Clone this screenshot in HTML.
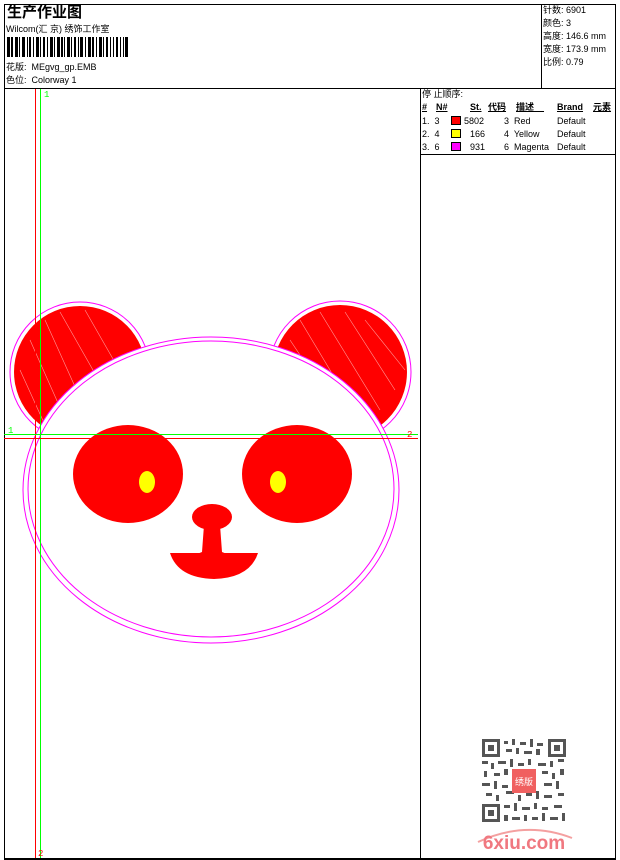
<!DOCTYPE html>
<html><head><meta charset="utf-8">
<style>
*{margin:0;padding:0;box-sizing:border-box}
body{width:620px;height:860px;background:#fff;position:relative;overflow:hidden;font-family:"Liberation Sans","Noto Sans CJK SC",sans-serif;font-size:9px;color:#000}
.a{position:absolute;white-space:nowrap;line-height:11px}
.b{position:absolute;background:#000}
</style></head><body>
<!-- borders -->
<div class="b" style="left:4px;top:4px;width:612px;height:1px"></div>
<div class="b" style="left:4px;top:4px;width:1px;height:856px"></div>
<div class="b" style="left:615px;top:4px;width:1px;height:856px"></div>
<div class="b" style="left:4px;top:858px;width:612px;height:2px"></div>
<div class="b" style="left:4px;top:88px;width:612px;height:1px"></div>
<div class="b" style="left:541px;top:4px;width:1px;height:84px"></div>
<div class="b" style="left:420px;top:88px;width:1px;height:770px"></div>
<div class="b" style="left:420px;top:154px;width:196px;height:1px"></div>

<div class="a" style="left:7px;top:4px;font-size:15px;line-height:18px;font-weight:bold">生产作业图</div>
<div class="a" style="left:6px;top:24px">Wilcom(汇 京) 绣饰工作室</div>
<svg style="position:absolute;left:7px;top:37px" width="121" height="20">
<g fill="#000">
<rect x="0" y="0" width="3" height="20"/><rect x="4" y="0" width="2" height="20"/><rect x="8" y="0" width="3" height="20"/><rect x="12" y="0" width="1" height="20"/><rect x="15" y="0" width="3" height="20"/><rect x="20" y="0" width="1" height="20"/><rect x="22" y="0" width="2" height="20"/><rect x="26" y="0" width="1" height="20"/><rect x="29" y="0" width="3" height="20"/><rect x="33" y="0" width="1" height="20"/><rect x="36" y="0" width="2" height="20"/><rect x="40" y="0" width="1" height="20"/><rect x="43" y="0" width="3" height="20"/><rect x="47" y="0" width="1" height="20"/><rect x="50" y="0" width="3" height="20"/><rect x="54" y="0" width="2" height="20"/><rect x="57" y="0" width="1" height="20"/><rect x="60" y="0" width="3" height="20"/><rect x="64" y="0" width="1" height="20"/><rect x="67" y="0" width="2" height="20"/><rect x="71" y="0" width="1" height="20"/><rect x="73" y="0" width="3" height="20"/><rect x="78" y="0" width="1" height="20"/><rect x="81" y="0" width="3" height="20"/><rect x="85" y="0" width="2" height="20"/><rect x="89" y="0" width="1" height="20"/><rect x="92" y="0" width="3" height="20"/><rect x="96" y="0" width="1" height="20"/><rect x="99" y="0" width="2" height="20"/><rect x="103" y="0" width="1" height="20"/><rect x="106" y="0" width="1" height="20"/><rect x="109" y="0" width="2" height="20"/><rect x="113" y="0" width="1" height="20"/><rect x="116" y="0" width="1" height="20"/><rect x="118" y="0" width="3" height="20"/>
</g></svg>
<div class="a" style="left:6px;top:62px">花版:&nbsp; MEgvg_gp.EMB</div>
<div class="a" style="left:6px;top:75px">色位:&nbsp; Colorway 1</div>

<div class="a" style="left:543px;top:5px">针数: 6901</div>
<div class="a" style="left:543px;top:18px">颜色: 3</div>
<div class="a" style="left:543px;top:31px">高度: 146.6 mm</div>
<div class="a" style="left:543px;top:44px">宽度: 173.9 mm</div>
<div class="a" style="left:543px;top:57px">比例: 0.79</div>

<div class="a" style="left:422px;top:89px">停 止顺序:</div>
<div class="a" style="left:422px;top:102px;font-weight:bold;text-decoration:underline">#</div>
<div class="a" style="left:436px;top:102px;font-weight:bold;text-decoration:underline">N#</div>
<div class="a" style="left:470px;top:102px;font-weight:bold;text-decoration:underline">St.</div>
<div class="a" style="left:488px;top:102px;font-weight:bold;text-decoration:underline">代码</div>
<div class="a" style="left:516px;top:102px;font-weight:bold;text-decoration:underline">描述&nbsp;&nbsp;&nbsp;&nbsp;</div>
<div class="a" style="left:557px;top:102px;font-weight:bold;text-decoration:underline">Brand</div>
<div class="a" style="left:593px;top:102px;font-weight:bold;text-decoration:underline">元素</div>

<div class="a" style="left:422px;top:116px">1.&nbsp; 3</div>
<div class="a" style="left:422px;top:129px">2.&nbsp; 4</div>
<div class="a" style="left:422px;top:142px">3.&nbsp; 6</div>
<div style="position:absolute;left:451px;top:116px;width:10px;height:9px;background:#f00;border:1px solid #000"></div>
<div style="position:absolute;left:451px;top:129px;width:10px;height:9px;background:#ff0;border:1px solid #000"></div>
<div style="position:absolute;left:451px;top:142px;width:10px;height:9px;background:#f0f;border:1px solid #000"></div>
<div class="a" style="left:464px;top:116px">5802</div>
<div class="a" style="left:470px;top:129px">166</div>
<div class="a" style="left:470px;top:142px">931</div>
<div class="a" style="left:504px;top:116px">3&nbsp; Red</div>
<div class="a" style="left:504px;top:129px">4&nbsp; Yellow</div>
<div class="a" style="left:504px;top:142px">6&nbsp; Magenta</div>
<div class="a" style="left:557px;top:116px">Default</div>
<div class="a" style="left:557px;top:129px">Default</div>
<div class="a" style="left:557px;top:142px">Default</div>

<!-- drawing -->
<svg style="position:absolute;left:0;top:0" width="620" height="860">
<defs>
<clipPath id="ec"><rect x="0" y="0" width="620" height="860"/></clipPath>
</defs>
<!-- ears -->
<circle cx="80" cy="372" r="70" fill="none" stroke="#f0f" stroke-width="1"/>
<circle cx="340" cy="372" r="71" fill="none" stroke="#f0f" stroke-width="1"/>
<circle cx="80" cy="372" r="66" fill="#f00"/>
<circle cx="340" cy="372" r="67" fill="#f00"/>
<g stroke="#fff" stroke-width="0.6" opacity="0.6">
<path d="M30 340 L70 430 M45 320 L90 420 M60 312 L110 400 M85 310 L125 380 M20 370 L45 425 M300 320 L360 420 M320 312 L380 410 M345 312 L395 390 M290 340 L330 400 M365 320 L405 370"/>
</g>
<!-- head -->
<ellipse cx="211" cy="490" rx="188" ry="153" fill="#fff" stroke="#f0f" stroke-width="1"/>
<ellipse cx="211" cy="489" rx="183" ry="148" fill="#fff" stroke="#f0f" stroke-width="1"/>
<!-- eyes -->
<ellipse cx="128" cy="474" rx="55" ry="49" fill="#f00"/>
<ellipse cx="297" cy="474" rx="55" ry="49" fill="#f00"/>
<ellipse cx="147" cy="482" rx="8" ry="11" fill="#ff0"/>
<ellipse cx="278" cy="482" rx="8" ry="11" fill="#ff0"/>
<!-- nose -->
<ellipse cx="212" cy="517" rx="20" ry="13" fill="#f00"/>
<path d="M204 525 L220 525 L222 552 L232 556 L192 556 L202 552 Z" fill="#f00"/>
<path d="M170 553 L258 553 Q250 578 214 579 Q178 578 170 553 Z" fill="#f00"/>
<!-- guides -->
<line x1="35.5" y1="89" x2="35.5" y2="858" stroke="#f00" stroke-width="1"/>
<line x1="40.5" y1="89" x2="40.5" y2="858" stroke="#0f0" stroke-width="1"/>
<line x1="4" y1="434.5" x2="418" y2="434.5" stroke="#0f0" stroke-width="1"/>
<line x1="4" y1="438.5" x2="418" y2="438.5" stroke="#f00" stroke-width="1"/>
<text x="44" y="97" fill="#0f0" font-size="9" font-family="Liberation Mono,monospace">1</text>
<text x="8" y="433" fill="#0f0" font-size="9" font-family="Liberation Mono,monospace">1</text>
<text x="407" y="437" fill="#f00" font-size="9" font-family="Liberation Mono,monospace">2</text>
<text x="38" y="856" fill="#f00" font-size="9" font-family="Liberation Mono,monospace">2</text>
<!-- QR -->
<g fill="#555" transform="translate(482,739)">
<rect x="0" y="0" width="18" height="18"/><rect x="3" y="3" width="12" height="12" fill="#fff"/><rect x="6" y="6" width="6" height="6"/>
<rect x="66" y="0" width="18" height="18"/><rect x="69" y="3" width="12" height="12" fill="#fff"/><rect x="72" y="6" width="6" height="6"/>
<rect x="0" y="65" width="18" height="18"/><rect x="3" y="68" width="12" height="12" fill="#fff"/><rect x="6" y="71" width="6" height="6"/>
<g id="q">
<rect x="22" y="2" width="4" height="3"/><rect x="30" y="0" width="3" height="6"/><rect x="38" y="3" width="6" height="3"/><rect x="48" y="0" width="3" height="8"/><rect x="55" y="4" width="6" height="3"/>
<rect x="24" y="10" width="6" height="3"/><rect x="34" y="9" width="3" height="6"/><rect x="42" y="12" width="8" height="3"/><rect x="54" y="10" width="4" height="6"/>
<rect x="0" y="22" width="6" height="3"/><rect x="9" y="24" width="3" height="6"/><rect x="16" y="22" width="8" height="3"/><rect x="28" y="20" width="3" height="8"/><rect x="36" y="24" width="6" height="3"/><rect x="46" y="20" width="3" height="6"/><rect x="56" y="24" width="8" height="3"/><rect x="68" y="22" width="3" height="6"/><rect x="76" y="20" width="6" height="3"/>
<rect x="2" y="32" width="3" height="6"/><rect x="12" y="34" width="6" height="3"/><rect x="22" y="30" width="4" height="6"/><rect x="60" y="32" width="6" height="3"/><rect x="70" y="34" width="3" height="6"/><rect x="78" y="30" width="4" height="6"/>
<rect x="0" y="44" width="8" height="3"/><rect x="12" y="42" width="3" height="8"/><rect x="20" y="46" width="6" height="3"/><rect x="62" y="44" width="8" height="3"/><rect x="74" y="42" width="3" height="8"/>
<rect x="4" y="54" width="6" height="3"/><rect x="14" y="56" width="3" height="6"/><rect x="24" y="52" width="8" height="3"/><rect x="36" y="56" width="3" height="6"/><rect x="44" y="54" width="6" height="3"/><rect x="54" y="52" width="3" height="8"/><rect x="62" y="56" width="8" height="3"/><rect x="76" y="54" width="6" height="3"/>
<rect x="22" y="66" width="6" height="3"/><rect x="32" y="64" width="3" height="8"/><rect x="40" y="68" width="8" height="3"/><rect x="52" y="64" width="3" height="6"/><rect x="60" y="68" width="6" height="3"/><rect x="72" y="66" width="8" height="3"/>
<rect x="22" y="76" width="4" height="6"/><rect x="30" y="78" width="8" height="3"/><rect x="42" y="76" width="3" height="6"/><rect x="50" y="78" width="6" height="3"/><rect x="60" y="74" width="3" height="8"/><rect x="68" y="78" width="8" height="3"/><rect x="80" y="74" width="3" height="8"/>
</g>
<rect x="30" y="30" width="24" height="24" fill="#f06060"/>
<text x="42" y="46" fill="#fff" font-size="9" text-anchor="middle" font-family="Noto Sans CJK SC,sans-serif">绣版</text>
</g>
<path d="M478 842 Q525 820 572 838" stroke="#f4a0a0" stroke-width="2" fill="none"/>
<text x="524" y="849" fill="#f07880" font-size="19" font-weight="bold" text-anchor="middle" font-family="Liberation Sans,sans-serif">6xiu.com</text>
</svg>
</body></html>
